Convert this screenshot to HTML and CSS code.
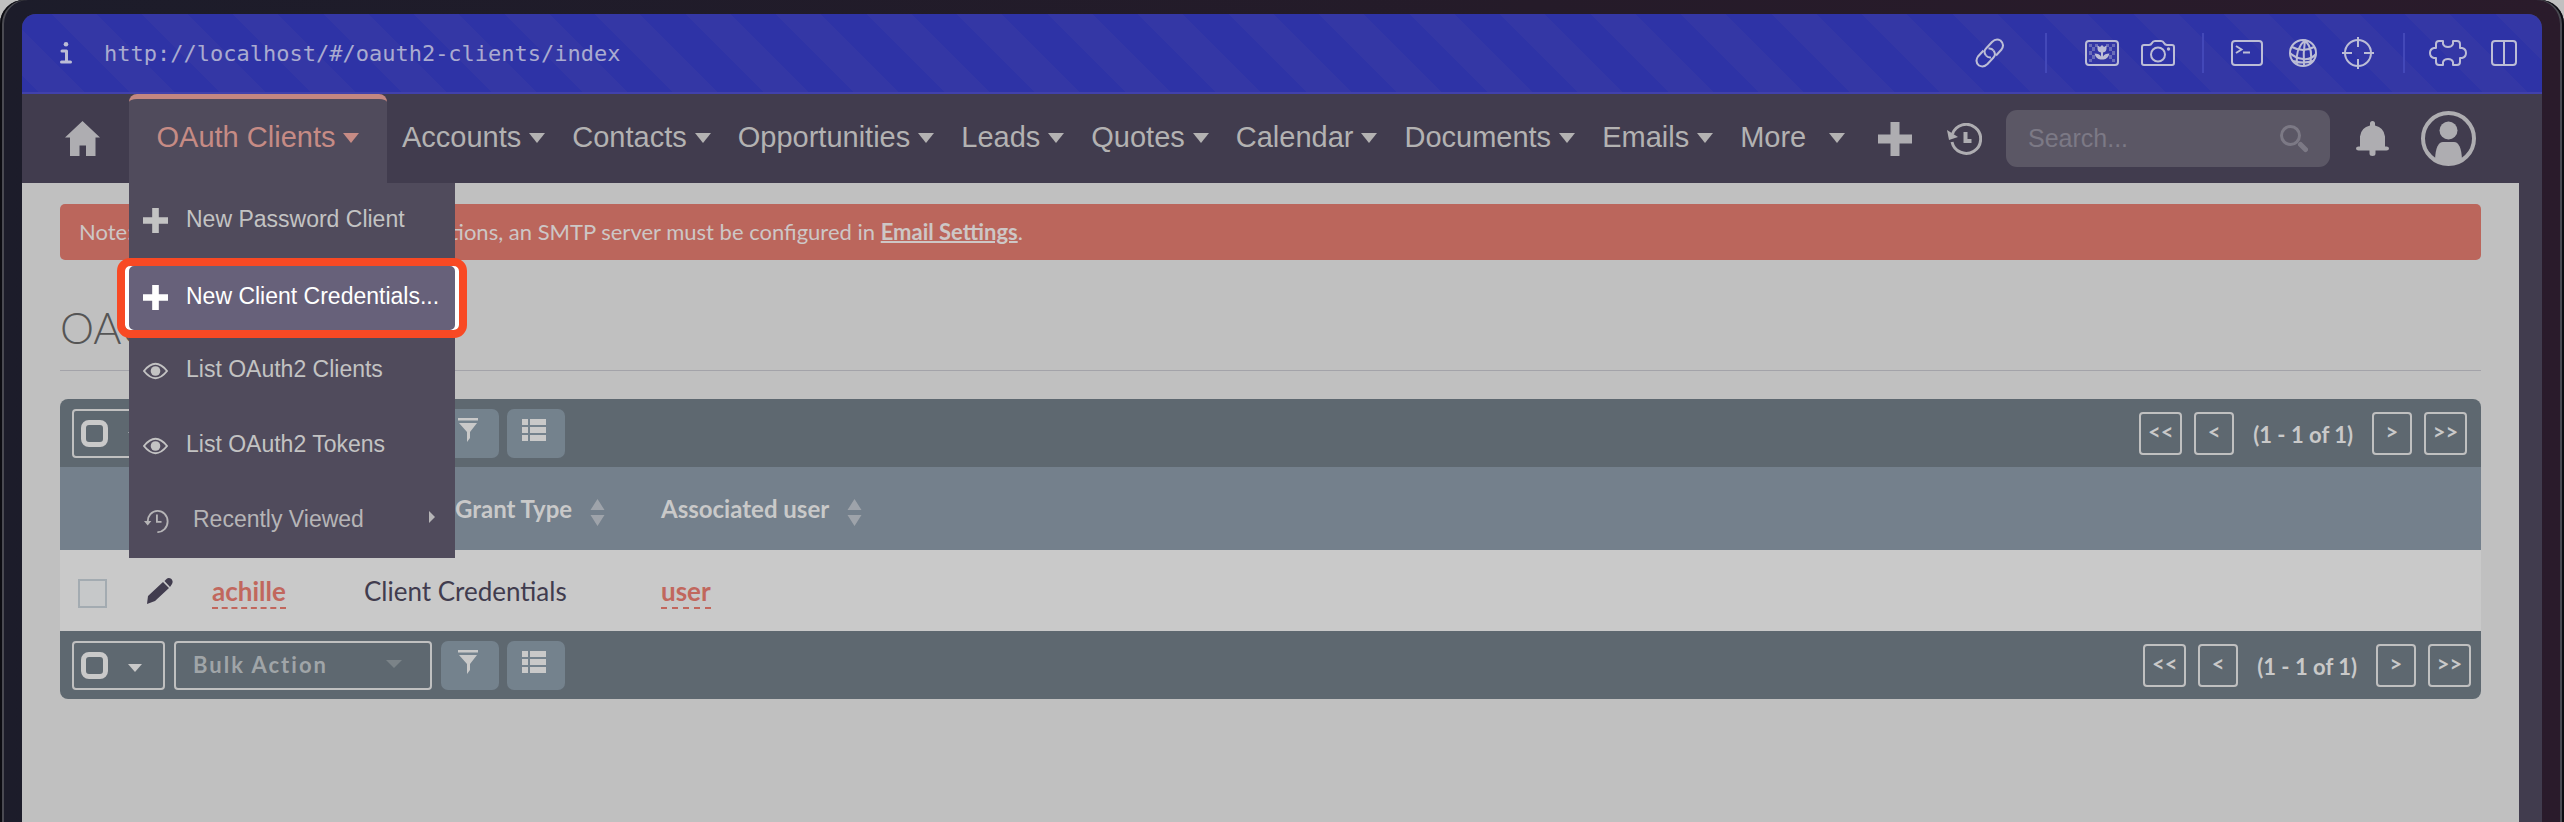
FILE: index.html
```html
<!DOCTYPE html>
<html lang="en">
<head>
<meta charset="utf-8">
<title>OAuth Clients</title>
<link rel="stylesheet" href="styles.css">
</head>
<body>
<svg class="defs" aria-hidden="true">
  <symbol id="plus" viewBox="0 0 34 34"><path fill="currentColor" d="M12.500 0h9v12.500H34v9H21.500V34h-9V21.500H0v-9h12.500z"/></symbol>
  <symbol id="eye" viewBox="0 0 26 18"><path fill="none" stroke="currentColor" stroke-width="2" d="M1 9Q7 1.500 13 1.500T25 9Q19 16.500 13 16.500T1 9z"/><circle cx="13" cy="9" r="5" fill="currentColor"/></symbol>
  <symbol id="funnel" viewBox="0 0 20 24"><path fill="currentColor" d="M0 0h20v2.500H0zM1 5h18l-7 9v6l-3 4v-10z"/></symbol>
  <symbol id="cols" viewBox="0 0 24 22"><path fill="currentColor" d="M0 0h6v6H0zM8 0h16v6H8zM0 8h6v6H0zM8 8h16v6H8zM0 16h6v6H0zM8 16h16v6H8z"/></symbol>
</svg>
<div class="device">
  <div class="screen">
    <header class="urlbar">
      <svg class="info" viewBox="0 0 12 22"><circle cx="6" cy="2.300" r="2.300" fill="currentColor"/><path fill="none" stroke="currentColor" stroke-width="3" stroke-linecap="round" stroke-linejoin="round" d="M2 9h4.500v11M1.500 20h9"/></svg>
      <span class="url">http://localhost/#/oauth2-clients/index</span>
      <div class="tools">
        <svg class="t-link" viewBox="0 0 30 30"><g fill="none" stroke="currentColor" stroke-width="2"><path d="M11 17.500q-3-4 0-7l6-6.500q4-4 8.500-1.500 4.500 4 1 9l-5.500 6"/><path d="M18.500 12.500q3 4 0 7l-6 6.500q-4 4-8.500 1.500-4.500-4-1-9l5.500-6"/><path d="M11 17.500q2 2.500 5 2M18.500 12.500q-2-2.500-5-2"/></g></svg>
        <span class="sep"></span>
        <svg class="t-pic" viewBox="0 0 34 26"><rect x="1" y="1" width="32" height="24" rx="3" fill="none" stroke="currentColor" stroke-width="2"/><path fill="currentColor" opacity=".4" d="M4 4h3v3H4zM10 4h3v3h-3zM7 7h3v4H7zM4 11h3v4H4zM7 15h3v4H7zM4 19h3v3H4zM27 4h3v3h-3zM21 4h3v3h-3zM24 7h3v4h-3zM27 11h3v4h-3zM24 15h3v4h-3zM27 19h3v3h-3z"/><path fill="currentColor" d="M12.500 5.500l2.500 1.500 2-2 2 2 2.500-1.500v3q0 3.500-3.500 4v4q1.500-3 6.500-3-1.500 5.500-6 6h-3q-4.500-.5-6-6 5 0 6.500 3v-4q-3.500-.5-3.500-4z"/></svg>
        <svg class="t-cam" viewBox="0 0 34 26"><g fill="none" stroke="currentColor" stroke-width="2"><path d="M3 5h5q2 0 3-2t3-2h6q2 0 3 2t3 2h5q2 0 2 2v16q0 2-2 2H3q-2 0-2-2V7q0-2 2-2z"/><circle cx="17" cy="14.500" r="7"/></g><circle cx="27.500" cy="9" r="1.700" fill="currentColor"/></svg>
        <span class="sep"></span>
        <svg class="t-term" viewBox="0 0 32 26"><g fill="none" stroke="currentColor" stroke-width="2"><rect x="1" y="1" width="30" height="24" rx="3"/><path d="M5 6l5.500 3.500L5 13M12 12.500h7"/></g></svg>
        <svg class="t-globe" viewBox="0 0 28 28"><g fill="none" stroke="currentColor" stroke-width="2"><circle cx="14" cy="14" r="13"/><path d="M16 1Q6 10 8 25M16 1Q14 14 15 27M16 1q9 10 5 24M3 8q11 6 22 0M1 14q5 5 13 6t13-5M4 22q10 3 20 0"/></g></svg>
        <svg class="t-cross" viewBox="0 0 32 32"><g fill="none" stroke="currentColor" stroke-width="2"><circle cx="16" cy="16" r="13"/><path d="M16 0v10M16 22v10M0 16h10M22 16h10"/></g></svg>
        <span class="sep"></span>
        <svg class="t-puz" viewBox="0 0 38 28"><path fill="none" stroke="currentColor" stroke-width="2" stroke-linejoin="round" d="M10 2h4v3q1 3 5 3t5-3V2h4q3 0 3 3v4h2q4 1 4 5t-4 5h-2v4q0 3-3 3h-4v-3q-1-3-5-3t-5 3v3h-4q-3 0-3-3v-4H5q-4-1-4-5t4-5h2V5q0-3 3-3z"/></svg>
        <svg class="t-split" viewBox="0 0 26 26"><path fill="none" stroke="currentColor" stroke-width="2" d="M4 1h18q3 0 3 3v18q0 3-3 3H4q-3 0-3-3V4q0-3 3-3zM13 1v24"/></svg>
      </div>
    </header>
    <nav class="nav">
      <a class="home" href="#" aria-label="Home"><svg viewBox="0 0 35 35"><path fill="currentColor" d="M17.500 0L35 16.500h-4.500V35H21V24.500h-6.500V35H5V16.500H0z"/></svg></a>
      <div class="tab">
        <button class="item active">OAuth Clients<i class="caret"></i></button>
        <div class="menu">
          <a href="#"><svg class="m-plus"><use href="#plus"/></svg><span>New Password Client</span></a>
          <a class="hot" href="#"><svg class="m-plus"><use href="#plus"/></svg><span>New Client Credentials...</span></a>
          <a href="#"><svg class="m-eye"><use href="#eye"/></svg><span>List OAuth2 Clients</span></a>
          <a href="#"><svg class="m-eye"><use href="#eye"/></svg><span>List OAuth2 Tokens</span></a>
          <a class="recent" href="#"><svg class="m-hist" viewBox="0 0 26 26"><path fill="none" stroke="currentColor" stroke-width="2" d="M4 14a10.800 11.500 0 1 1 10.500 11M14 6v8h5"/><path fill="currentColor" d="M0 13h8l-4 5z"/></svg><span>Recently Viewed</span><i class="side"></i></a>
        </div>
      </div>
      <div class="items">
        <button class="item">Accounts<i class="caret"></i></button>
        <button class="item">Contacts<i class="caret"></i></button>
        <button class="item">Opportunities<i class="caret"></i></button>
        <button class="item">Leads<i class="caret"></i></button>
        <button class="item">Quotes<i class="caret"></i></button>
        <button class="item">Calendar<i class="caret"></i></button>
        <button class="item">Documents<i class="caret"></i></button>
        <button class="item">Emails<i class="caret"></i></button>
        <button class="item more">More<i class="caret"></i></button>
      </div>
      <div class="actions">
        <button class="ib add" aria-label="Create"><svg><use href="#plus"/></svg></button>
        <button class="ib hist" aria-label="History"><svg viewBox="0 0 35 32"><path fill="none" stroke="currentColor" stroke-width="3" d="M5.500 11a14.500 14.500 0 1 1-.5 8"/><path fill="none" stroke="currentColor" stroke-width="4" d="M18.500 9v9h6"/><path fill="currentColor" d="M0 7l11 7-9 3z"/></svg></button>
        <label class="search"><input type="text" placeholder="Search..." aria-label="Search"><svg viewBox="0 0 28 28"><circle cx="10.500" cy="10.500" r="9" fill="none" stroke="currentColor" stroke-width="3"/><path d="M20.500 19.500l5 5" stroke="currentColor" stroke-width="5" stroke-linecap="round"/></svg></label>
        <button class="ib bell" aria-label="Notifications"><svg viewBox="0 0 33 35"><path fill="currentColor" d="M14 2.500a2.500 2.500 0 0 1 5 0V4.500q9 2 10 11v10h1.500q2.500 0 2.500 2t-2.500 2H19.500v3q0 2.500-3 2.500t-3-2.500v-3H2.500Q0 29.500 0 27.500t2.500-2H4v-10q1-9 10-11z"/></svg></button>
        <button class="ib user" aria-label="Profile"><svg viewBox="0 0 55 55"><circle cx="27.500" cy="27.500" r="25.500" fill="none" stroke="currentColor" stroke-width="4"/><circle cx="27.500" cy="19.500" r="9" fill="currentColor"/><path fill="currentColor" d="M14 48q1-17 8-17h11q7 0 8 17-13 9-27 0z"/></svg></button>
      </div>
    </nav>
    <main class="page">
      <p class="alert">Note: To send user assignment notifications, an SMTP server must be configured in <a href="#">Email Settings</a>.</p>
      <h1>OAUTH2 CLIENTS</h1>
      <section class="list">
        <div class="bar">
          <button class="sel" aria-label="Select"><i class="box"></i><i class="caret"></i></button>
          <button class="bulk">Bulk Action<i class="caret"></i></button>
          <button class="sq" aria-label="Filter"><svg class="funnel"><use href="#funnel"/></svg></button>
          <button class="sq" aria-label="Columns"><svg class="cols"><use href="#cols"/></svg></button>
          <div class="pager"><button class="far">&lt;&lt;</button><button>&lt;</button><span>(1 - 1 of 1)</span><button>&gt;</button><button class="far">&gt;&gt;</button></div>
        </div>
        <table>
          <thead><tr><th class="c-check"></th><th class="c-edit"></th><th class="c-name"></th><th class="c-type"><span class="type">Grant Type</span><svg class="sort" viewBox="0 0 14 27"><path fill="currentColor" d="M7 0l7 11H0zM0 16h14L7 27z"/></svg></th><th>Associated user<svg class="sort" viewBox="0 0 14 27"><path fill="currentColor" d="M7 0l7 11H0zM0 16h14L7 27z"/></svg></th></tr></thead>
          <tbody><tr><td class="first"><input type="checkbox" aria-label="Select achille"></td><td><svg class="pencil" viewBox="0 0 26 26"><path fill="currentColor" d="M0 26l1-8L16 4l6 6L8 23zM17.500 3l2-2q2-2 5 0 2 2.500.5 5l-2 3z"/></svg></td><td><a href="#">achille</a></td><td>Client Credentials</td><td><a href="#">user</a></td></tr></tbody>
        </table>
        <div class="bar foot">
          <button class="sel" aria-label="Select"><i class="box"></i><i class="caret"></i></button>
          <button class="bulk">Bulk Action<i class="caret"></i></button>
          <button class="sq" aria-label="Filter"><svg class="funnel"><use href="#funnel"/></svg></button>
          <button class="sq" aria-label="Columns"><svg class="cols"><use href="#cols"/></svg></button>
          <div class="pager"><button class="far">&lt;&lt;</button><button>&lt;</button><span>(1 - 1 of 1)</span><button>&gt;</button><button class="far">&gt;&gt;</button></div>
        </div>
      </section>
    </main>
  </div>
</div>
</body>
</html>
```
FILE: styles.css
```css
* { box-sizing: border-box; }
html, body { height: 100%; }
body { margin: 0; background: #c0c0c0; font-family: Lato, sans-serif; overflow: hidden; }
button { font: inherit; color: inherit; background: none; border: 0; padding: 0; margin: 0; }
svg { display: block; flex: none; }
.defs { position: absolute; width: 0; height: 0; }
.device {
  height: 100%; padding: 14px 22px 0;
  background: linear-gradient(90deg, #1c1c2a, #251b29 60%, #2a1b2b);
  border-radius: 24px 24px 0 0;
  box-shadow: inset 2px 0 #0c0c12, inset 4px 0 #4a4a52, inset -2px 0 #0c0c12, inset -4px 0 #4a4a52;
}
.screen { height: 100%; background: #413c4e; border-radius: 14px 14px 0 0; display: flex; flex-direction: column; }

.urlbar {
  height: 80px; flex: none; display: flex; align-items: center; padding: 0 25px 0 38px;
  border-radius: 14px 14px 0 0; border-bottom: 2px solid #4141ab; color: #bcbdd6;
  background: repeating-linear-gradient(45deg, #2e33a6 0 12px, #3437a5 12px 44px, #2e33a6 44px 64px);
}
.info { width: 12px; height: 22px; }
.url { margin-left: 32px; font: 22px "DejaVu Sans Mono", monospace; color: #aaabd0; }
.tools { margin-left: auto; display: flex; align-items: center; }
.sep { width: 2px; height: 40px; background: #4348b8; }
.t-link { width: 30px; height: 30px; margin-right: 40px; }
.t-pic { width: 34px; height: 26px; margin: 0 22px 0 38px; }
.t-cam { width: 34px; height: 26px; margin-right: 27px; }
.t-term { width: 32px; height: 26px; margin: 0 26px 0 27px; }
.t-globe { width: 28px; height: 28px; margin-right: 25px; }
.t-cross { width: 32px; height: 32px; margin-right: 29px; }
.t-puz { width: 38px; height: 28px; margin: 0 24px; }
.t-split { width: 26px; height: 26px; }

.nav {
  height: 89px; flex: none; display: flex; align-items: stretch; padding: 0 66px 0 43px;
  font: 29px/36px "Liberation Sans", Arial, sans-serif; color: #b3b2b2;
}
.home { align-self: center; color: #aeadb1; margin-right: 29px; }
.home svg { width: 35px; height: 35px; }
.caret { display: inline-block; border: 8px solid transparent; border-top: 10px solid currentColor; border-bottom: 0; margin-left: 8px; vertical-align: 4px; }
.item { white-space: nowrap; padding-bottom: 3px; }
.tab { position: relative; width: 258px; }
.active { width: 100%; height: 100%; background: #504b5c; border-top: 5px solid #c38781; border-radius: 8px 8px 0 0; color: #c68b85; padding-bottom: 8px; }
.items { display: flex; gap: 27px; margin-left: 15px; }
.more .caret { margin-left: 23px; }
.menu { position: absolute; z-index: 2; top: 100%; left: 0; width: 326px; background: #504b5c; font-size: 23px; }
.menu a { height: 75px; display: flex; align-items: center; gap: 18px; padding: 0 15px 0 14px; color: #c3c3c3; text-decoration: none; white-space: nowrap; }
.menu span { padding-bottom: 3px; }
.menu a.hot { position: relative; color: #fff; background: #67617a; height: 64px; margin: 8px 0 3px; padding-bottom: 2px; z-index: 1; }
.hot::after { content: ""; position: absolute; inset: -8px -12px; border: 8px solid #f84924; border-radius: 13px; box-shadow: inset 4px 0 #fff, inset -4px 0 #fff; }
.m-plus { width: 25px; height: 25px; }
.m-eye { width: 25px; height: 18px; }
.m-hist { width: 26px; height: 24px; }
.menu .recent { gap: 24px; color: #b6b5b7; }
.side { margin: 0 5px 7px auto; border: 6px solid transparent; border-left-color: currentColor; border-right: 0; }
.actions { margin-left: auto; display: flex; align-items: center; color: #aeadb1; }
.add svg { width: 34px; height: 34px; }
.hist { margin: 0 24px 0 35px; }
.hist svg { width: 35px; height: 32px; }
.search { width: 324px; height: 57px; border-radius: 11px; background: #5b5765; display: flex; align-items: center; padding: 0 22px; color: #7c7985; }
.search input { flex: 1; min-width: 0; border: 0; outline: 0; background: none; padding: 0; font: 25px "Liberation Sans", Arial, sans-serif; }
.search input::placeholder { color: #7c7985; opacity: 1; }
.search svg { width: 28px; height: 28px; }
.bell { margin: 0 32px 0 26px; }
.bell svg { width: 33px; height: 35px; }
.user svg { width: 55px; height: 55px; }

.page { flex: 1; background: #c0c0c0; margin-right: 23px; padding: 21px 38px 0; }
.alert { margin: 0; background: #bb665c; border-radius: 5px; height: 56px; line-height: 56px; padding: 0 19px; font-size: 22px; color: #cdc7c6; }
.alert a { color: inherit; font-weight: 700; text-decoration: underline; text-decoration-thickness: 2px; }
h1 { margin: 0 0 28px; height: 111px; padding-top: 42px; border-bottom: 1px solid #a3a3a9; font-size: 43px; line-height: 52px; font-weight: 300; color: #555; }
.bar { height: 68px; background: #5e6870; display: flex; align-items: center; padding: 0 14px 0 12px; border-radius: 8px 8px 0 0; color: #c9c9c9; }
.foot { border-radius: 0 0 8px 8px; padding-right: 10px; }
.sel, .bulk { height: 49px; border: 2px solid #c0c0c0; border-radius: 4px; display: flex; align-items: center; }
.sel { width: 93px; padding: 0 7px; }
.box { width: 27px; height: 27px; border: 5px solid #c9c9c9; border-radius: 8px; }
.sel .caret { margin: 5px 0 0 20px; border-width: 8px 7px 0; }
.bulk { width: 258px; margin: 0 9px; padding: 0 28px 2px 17px; justify-content: space-between; font-size: 22px; font-weight: 700; letter-spacing: 2px; color: #a0a5a8; }
.bulk .caret { color: #7b8388; border-width: 8px 8px 0; }
.sq { width: 58px; height: 49px; border-radius: 7px; background: #74828d; display: flex; justify-content: center; padding: 9px 4px 0 0; margin-right: 8px; }
.funnel { width: 20px; height: 24px; }
.cols { width: 24px; height: 22px; margin-top: 1px; }
.pager { margin-left: auto; display: flex; align-items: center; gap: 12px; font-size: 22px; font-weight: 700; }
.pager span { padding: 3px 7px 0; }
.pager button { width: 40px; height: 43px; border: 2px solid #c0c0c0; border-radius: 4px; padding-bottom: 3px; }
.pager .far { width: 43px; }
table { width: 100%; border-collapse: collapse; table-layout: fixed; text-align: left; font-size: 26px; color: #413c4e; }
th { height: 83px; padding: 2px 0 0; background: #74808c; color: #c9c9c9; font-size: 24px; }
.c-check { width: 87px; } .c-edit { width: 65px; } .c-name { width: 152px; } .c-type { width: 297px; }
.type { margin-left: 91px; }
.sort { display: inline-block; width: 15px; height: 27px; margin-left: 18px; vertical-align: -8px; color: #9ea3aa; }
td { height: 81px; padding: 0; background: #c9c9c9; }
td a { color: #c1675d; font-weight: 700; text-decoration: none; border-bottom: 2px dashed #c1675d; }
.first { padding-left: 18px; }
.first input { appearance: none; display: block; width: 29px; height: 29px; margin: 5px 0 0; border: 2px solid #a3abb1; background: #c6c8c9; }
.pencil { width: 26px; height: 26px; }
```
